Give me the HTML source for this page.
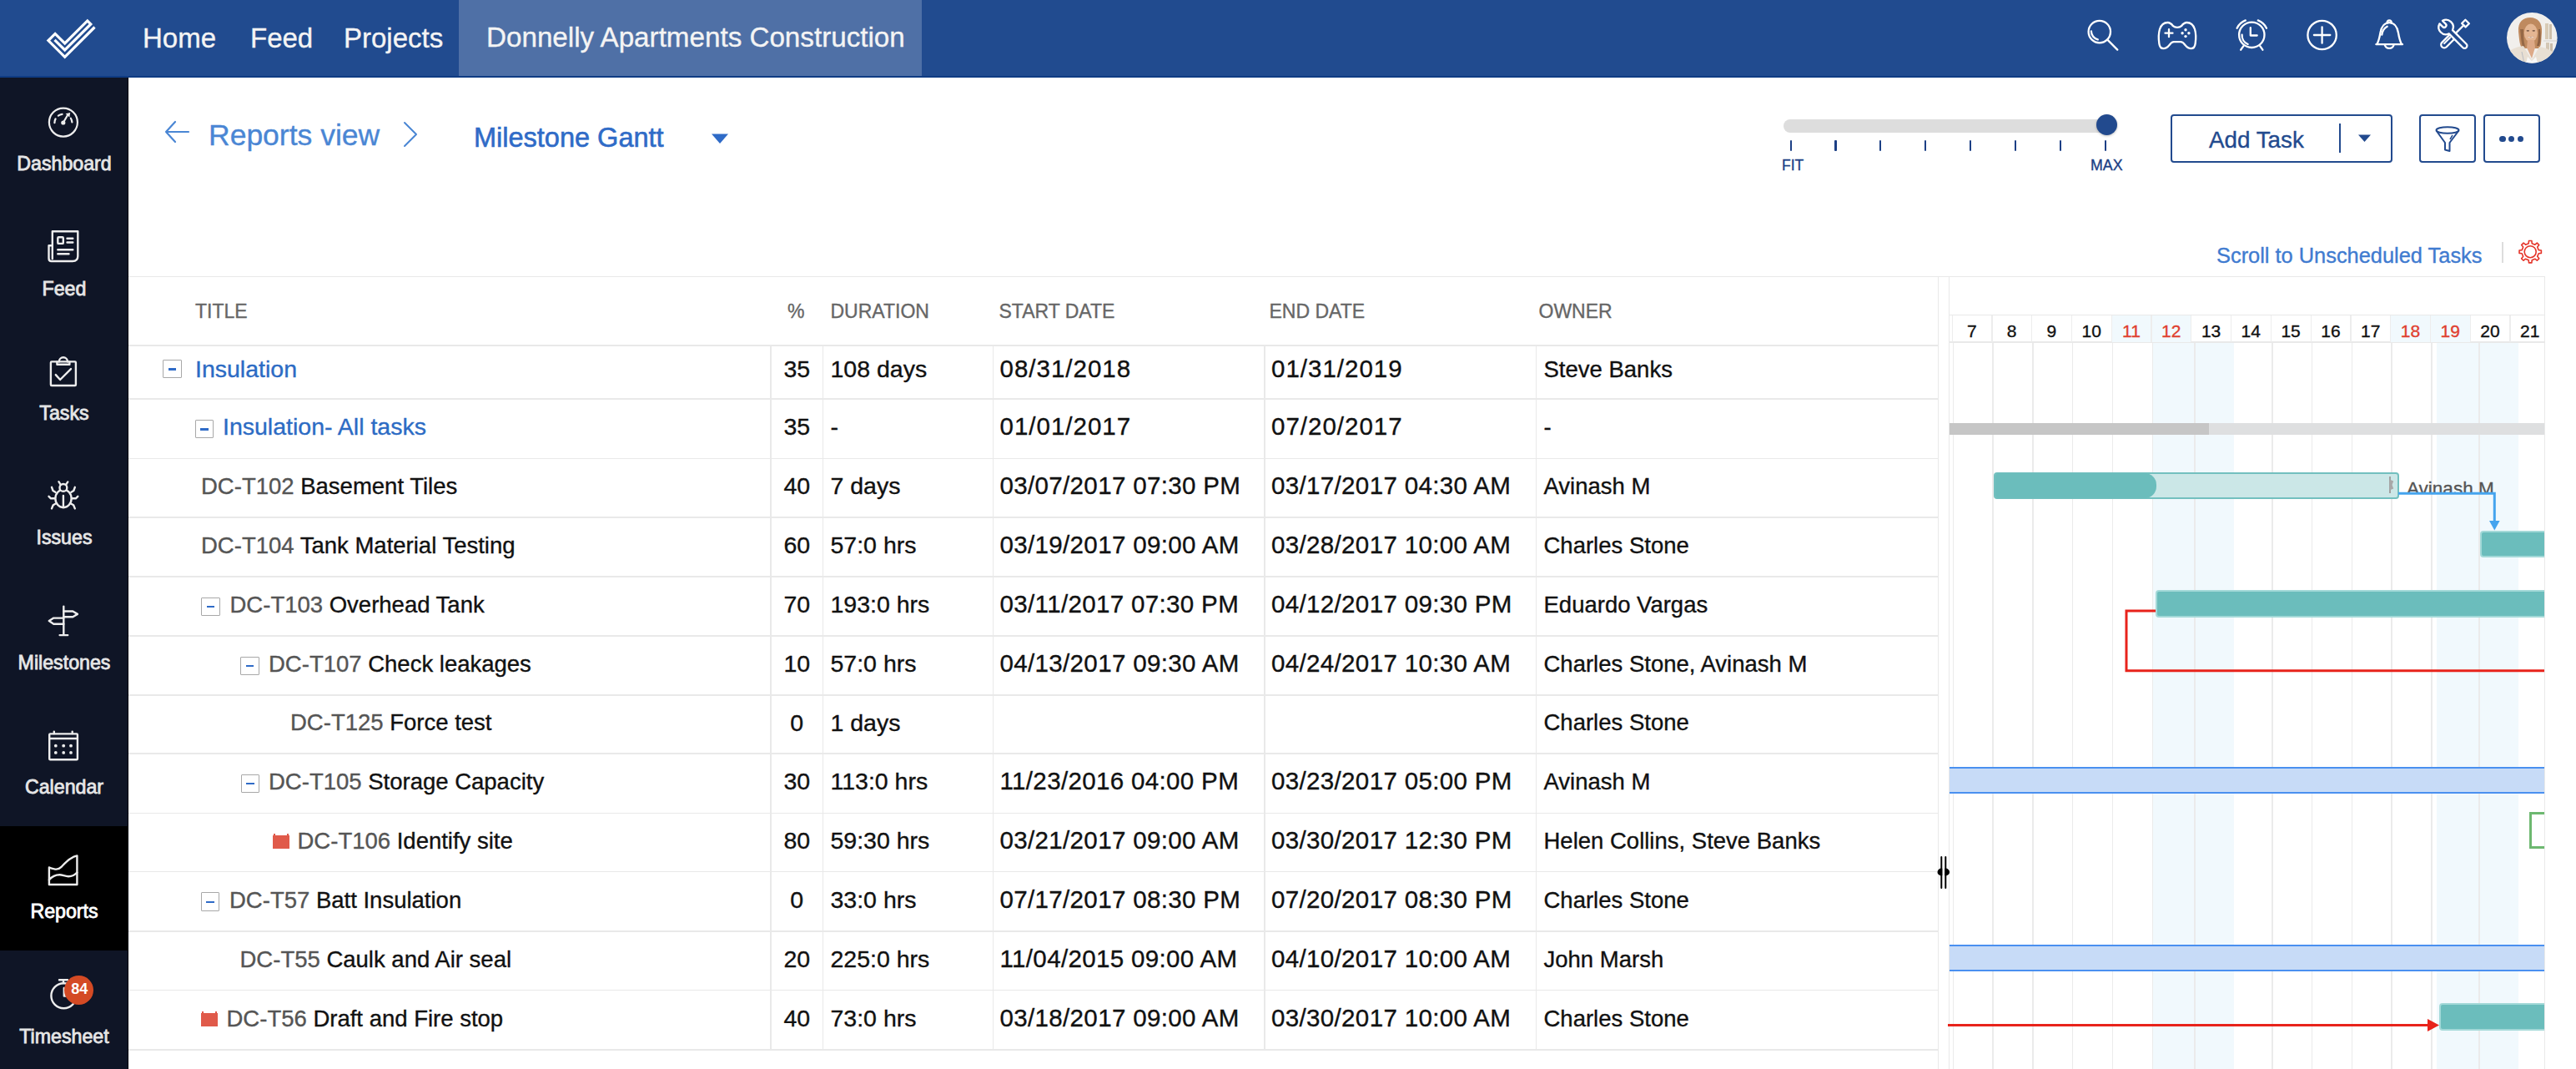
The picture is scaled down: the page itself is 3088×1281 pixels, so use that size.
<!DOCTYPE html>
<html><head><meta charset="utf-8"><title>Milestone Gantt</title>
<style>
html,body{margin:0;padding:0;}
body{width:3088px;height:1281px;overflow:hidden;background:#fff;position:relative;font-family:"Liberation Sans",sans-serif;}
.t{position:absolute;white-space:nowrap;line-height:1;-webkit-text-stroke:0.35px currentColor;}
.r{position:absolute;}
svg{position:absolute;overflow:visible;}
</style></head><body>
<div class="r" style="left:0.0px;top:0.0px;width:3088.0px;height:93.0px;background:#214B8F;"></div>
<div class="r" style="left:550.0px;top:0.0px;width:555.0px;height:91.0px;background:#4F70A6;"></div>
<div class="r" style="left:0.0px;top:91.0px;width:3088.0px;height:2.0px;background:#0F3C83;"></div>
<svg style="left:0;top:0" width="160" height="92"><path d="M65.5,47.8 L77.7,60 L108.8,28.9 L104.8,24.9 L77.7,52 L66.1,40.4 L57.95,48.55 L77.7,68.3 L113.5,32.5" fill="none" stroke="#fff" stroke-width="3.2" stroke-linejoin="miter"/></svg>
<div class="t " style="left:171.0px;top:28.6px;font-size:33px;color:#F4F4F4;">Home</div>
<div class="t " style="left:300.0px;top:28.6px;font-size:33px;color:#F4F4F4;">Feed</div>
<div class="t " style="left:412.0px;top:28.6px;font-size:33px;color:#F4F4F4;">Projects</div>
<div class="t " style="left:583.0px;top:28.4px;font-size:33.2px;color:#F4F4F4;">Donnelly Apartments Construction</div>
<svg style="left:2495px;top:15px" width="60" height="60"><circle cx="21.8" cy="23.1" r="13.2" fill="none" stroke="#fff" stroke-width="2.3" stroke-linecap="round" stroke-linejoin="round" stroke-width="2"/><path d="M31.6,32.9 L43.3,44.6" fill="none" stroke="#fff" stroke-width="2.3" stroke-linecap="round" stroke-linejoin="round" stroke-width="2"/><path d="M11.9,22.5 A10.2,10.2 0 0 0 19.8,32.4" fill="none" stroke="#fff" stroke-width="2.3" stroke-linecap="round" stroke-linejoin="round" stroke-width="2"/></svg>
<svg style="left:2580px;top:15px" width="60" height="60"><path d="M25,16.2 C23,13.5 21.5,12 18.5,12 C13,12 10.5,15.5 9,20 C7.8,24 7.5,31 8.3,37 C8.8,41 10.5,43.2 13.5,43.2 C16.5,43.2 18.5,41.5 20.5,39 C22,37 23.5,35.2 26,35.2 L34,35.2 C36.5,35.2 38,37 39.5,39 C41.5,41.5 43.5,43.2 46.5,43.2 C49.5,43.2 51.2,41 51.7,37 C52.5,31 52.2,24 51,20 C49.5,15.5 47,12 41.5,12 C38.5,12 37,13.5 35,16.2 C33.5,17.5 31.5,17.8 30,17.8 C28.5,17.8 26.5,17.5 25,16.2 Z" fill="none" stroke="#fff" stroke-width="2.3" stroke-linecap="round" stroke-linejoin="round" stroke-width="2.4"/><path d="M20,20.2 L20,29.2 M15.5,24.7 L24.5,24.7" fill="none" stroke="#fff" stroke-width="2.3" stroke-linecap="round" stroke-linejoin="round" stroke-width="3.8" stroke-linecap="butt"/><circle cx="40" cy="20.8" r="1.7" fill="#fff"/><circle cx="40" cy="28.6" r="1.7" fill="#fff"/><circle cx="36.1" cy="24.7" r="1.7" fill="#fff"/><circle cx="43.9" cy="24.7" r="1.7" fill="#fff"/></svg>
<svg style="left:2668px;top:15px" width="60" height="60"><circle cx="31.3" cy="26.8" r="15.2" fill="none" stroke="#fff" stroke-width="2.3" stroke-linecap="round" stroke-linejoin="round" stroke-width="2"/><path d="M29.8,18.2 L29.8,27.5 L37.7,27.5" fill="none" stroke="#fff" stroke-width="2.3" stroke-linecap="round" stroke-linejoin="round" stroke-width="2"/><path d="M13.6,18.7 A19.3,19.3 0 0 1 23.8,9.4 M38.8,9.4 A19.3,19.3 0 0 1 49,18.7" fill="none" stroke="#fff" stroke-width="2.3" stroke-linecap="round" stroke-linejoin="round" stroke-width="2"/><path d="M21.4,40.1 L18.2,44.7 M41.2,40.1 L44.4,44.7" fill="none" stroke="#fff" stroke-width="2.3" stroke-linecap="round" stroke-linejoin="round" stroke-width="2"/><path d="M19.6,26.6 A11.7,11.7 0 0 0 26.6,38" fill="none" stroke="#fff" stroke-width="2.3" stroke-linecap="round" stroke-linejoin="round" stroke-width="2"/></svg>
<svg style="left:2753px;top:15px" width="60" height="60"><circle cx="30.6" cy="27" r="17.2" fill="none" stroke="#fff" stroke-width="2.3" stroke-linecap="round" stroke-linejoin="round" stroke-width="2.1"/><path d="M30.6,17.3 L30.6,36.7 M20.9,27 L40.3,27" fill="none" stroke="#fff" stroke-width="2.3" stroke-linecap="round" stroke-linejoin="round" stroke-width="2.1" stroke-linecap="butt"/></svg>
<svg style="left:2834px;top:15px" width="60" height="60"><path d="M14.4,38.2 L46,38.2 M15.5,37.8 C17.5,34 18.5,30 19.5,24 C20.8,16.5 25,12.1 30.2,12.1 C35.4,12.1 39.6,16.5 40.9,24 C41.9,30 42.9,34 44.9,37.8" fill="none" stroke="#fff" stroke-width="2.3" stroke-linecap="round" stroke-linejoin="round" stroke-width="2.2"/><path d="M27.5,12.8 C27.5,10.5 28.7,9.3 30.2,9.3 C31.7,9.3 32.9,10.5 32.9,12.8" fill="none" stroke="#fff" stroke-width="2.3" stroke-linecap="round" stroke-linejoin="round" stroke-width="2.2"/><path d="M24.8,38.8 A5.6,5.6 0 0 0 35.6,38.8" fill="none" stroke="#fff" stroke-width="2.3" stroke-linecap="round" stroke-linejoin="round" stroke-width="2.2"/><path d="M21.3,26.6 C21.9,22.5 23.5,19 27.7,16.8" fill="none" stroke="#fff" stroke-width="2.3" stroke-linecap="round" stroke-linejoin="round" stroke-width="1.7"/></svg>
<svg style="left:2910px;top:15px" width="60" height="60"><g transform="translate(45.5,13.1) rotate(45)" fill="#214B8F" stroke="#fff" stroke-width="2.3" stroke-linejoin="round" stroke-linecap="round"><rect x="-3.2" y="-3" width="6.4" height="6"/><path d="M0,3 L0,17"/><path d="M-3.8,17 L3.8,17 L3.8,36 A3.8,3.8 0 0 1 -3.8,36 Z"/><path d="M-1,25 L-1,35" stroke-width="2"/></g><g transform="translate(22.1,17.5) rotate(-45)" fill="#214B8F" stroke="#fff" stroke-width="2.3" stroke-linejoin="round"><path d="M-3,8.17 A8.7,8.7 0 0 1 -2.5,-8.33 L-2.5,-3 A2.5,2.5 0 0 0 2.5,-3 L2.5,-8.33 A8.7,8.7 0 0 1 3,8.17 L3,31.6 A3,3 0 0 1 -3,31.6 Z"/></g></svg>
<svg style="left:3004.6px;top:15.2px" width="61" height="61"><defs><clipPath id="av"><circle cx="30.3" cy="30.3" r="30.3"/></clipPath></defs>
<g clip-path="url(#av)"><rect width="61" height="61" fill="#F1EFEC"/>
<rect x="46" y="13" width="4" height="19" fill="#D8CBB6"/><rect x="51" y="14" width="3" height="18" fill="#CDBFAA"/>
<rect x="44" y="33" width="17" height="2" fill="#E3E0DC"/><rect x="47" y="36" width="4" height="16" fill="#D4C7B5"/><rect x="52" y="37" width="3" height="14" fill="#C9BCA9"/>
<path d="M14,23 C13,11 20,6 28,6 C37,6 43,12 42,24 C41,33 42,38 39,43 L18,43 C15,37 15,31 14,23 Z" fill="#BF8A5F"/>
<path d="M16,20 C17,28 17,35 19,41 L22,41 C20,34 20,27 20,20 Z" fill="#7A5236" opacity="0.6"/>
<path d="M38,20 C38,28 38,34 36,40 L39,40 C41,34 41,27 40,20 Z" fill="#6B4630" opacity="0.6"/>
<ellipse cx="28.8" cy="24.5" rx="8" ry="11" fill="#E4B693"/><ellipse cx="25.3" cy="21.8" rx="1.8" ry="0.9" fill="#7A5A48"/><ellipse cx="32.3" cy="21.8" rx="1.8" ry="0.9" fill="#7A5A48"/><path d="M25,28.5 Q28.8,31.8 32.6,28.5 Q28.8,30 25,28.5 Z" fill="#8E5C4C"/><path d="M25.6,29.2 Q28.8,31 32,29.2" fill="none" stroke="#F4EDE6" stroke-width="0.9"/>
<path d="M25,33 L33,33 L34,42 L30,55 L24,42 Z" fill="#DDA987"/>
<path d="M0,61 L0,49 C6,43 13,41 20,40 L30,57 L39,41 C46,42 53,45 61,51 L61,61 Z" fill="#E8DFD3"/>
<path d="M25,53 L30,58 L35,53 L37,61 L23,61 Z" fill="#F8F8F8"/>
<path d="M18,47 L21,61" stroke="#9AA6B8" stroke-width="1" opacity="0.6"/>
</g></svg>
<div class="r" style="left:0.0px;top:93.0px;width:154.0px;height:1188.0px;background:#0F1526;"></div>
<div class="r" style="left:153.0px;top:93.0px;width:1.0px;height:1188.0px;background:#05080F;"></div>
<div class="r" style="left:0.0px;top:990.0px;width:153.0px;height:149.0px;background:#000000;"></div>
<div class="t" style="left:-223.0px;width:600px;text-align:center;top:185.4px;font-size:23.2px;color:#E6E6E6;-webkit-text-stroke:0.8px currentColor;">Dashboard</div>
<div class="t" style="left:-223.0px;width:600px;text-align:center;top:334.7px;font-size:23.2px;color:#E6E6E6;-webkit-text-stroke:0.8px currentColor;">Feed</div>
<div class="t" style="left:-223.0px;width:600px;text-align:center;top:484.0px;font-size:23.2px;color:#E6E6E6;-webkit-text-stroke:0.8px currentColor;">Tasks</div>
<div class="t" style="left:-223.0px;width:600px;text-align:center;top:633.3px;font-size:23.2px;color:#E6E6E6;-webkit-text-stroke:0.8px currentColor;">Issues</div>
<div class="t" style="left:-223.0px;width:600px;text-align:center;top:782.6px;font-size:23.2px;color:#E6E6E6;-webkit-text-stroke:0.8px currentColor;">Milestones</div>
<div class="t" style="left:-223.0px;width:600px;text-align:center;top:931.9px;font-size:23.2px;color:#E6E6E6;-webkit-text-stroke:0.8px currentColor;">Calendar</div>
<div class="t" style="left:-223.0px;width:600px;text-align:center;top:1081.2px;font-size:23.2px;color:#FFFFFF;-webkit-text-stroke:0.8px currentColor;">Reports</div>
<div class="t" style="left:-223.0px;width:600px;text-align:center;top:1230.5px;font-size:23.2px;color:#E6E6E6;-webkit-text-stroke:0.8px currentColor;">Timesheet</div>
<svg style="left:46px;top:117.0px" width="60" height="60"><circle cx="29.9" cy="29.6" r="17" fill="none" stroke="#EDEDED" stroke-width="2.2"/><path d="M19.4,30.2 A10.5,10.5 0 0 1 40.4,30.2" fill="none" stroke="#EDEDED" stroke-width="2.2" stroke-linecap="round" stroke-dasharray="5 5 5 12 5"/><path d="M29.8,30 L35.3,20.5" stroke="#EDEDED" stroke-width="2.2"/><circle cx="29.8" cy="30" r="2.6" fill="#EDEDED"/><path d="M32.6,19.2 L38.2,18 L37.3,23.6 Z" fill="#EDEDED"/></svg>
<svg style="left:46px;top:266.3px" width="60" height="60"><path d="M16.8,44 L16.8,11.2 L47.3,11.2 L47.3,41 C47.3,45 45,47 41,47 L15.5,47 C13.5,47 12.5,45.5 12.5,43.5 L12.5,28.3 L16.8,28.3" fill="none" stroke="#EDEDED" stroke-width="2.4" stroke-linecap="round" stroke-linejoin="round" stroke-width="2.2"/><rect x="23.3" y="18.3" width="6.5" height="7.6" rx="1" fill="none" stroke="#EDEDED" stroke-width="2.4" stroke-linecap="round" stroke-linejoin="round" stroke-width="2.2"/><path d="M34.5,19.8 L41.3,19.8 M34.5,24.5 L41.3,24.5 M23.3,33.2 L41.3,33.2 M23.3,38.3 L36.5,38.3" fill="none" stroke="#EDEDED" stroke-width="2.4" stroke-linecap="round" stroke-linejoin="round" stroke-width="2.2"/></svg>
<svg style="left:46px;top:415.6px" width="60" height="60"><rect x="14.9" y="17.4" width="30" height="28.6" rx="1" fill="none" stroke="#EDEDED" stroke-width="2.4" stroke-linecap="round" stroke-linejoin="round" stroke-width="2.2"/><path d="M22.4,17.6 L22.4,20.8 L37.4,20.8 L37.4,17.6 M24.8,17.4 A5.1,5.1 0 0 1 35,17.4" fill="none" stroke="#EDEDED" stroke-width="2.4" stroke-linecap="round" stroke-linejoin="round" stroke-width="2.2"/><path d="M20.8,33.1 L26.1,39 L39,26.1" fill="none" stroke="#EDEDED" stroke-width="2.4" stroke-linecap="round" stroke-linejoin="round" stroke-width="2.2"/></svg>
<svg style="left:46px;top:564.9px" width="60" height="60"><ellipse cx="30" cy="32.4" rx="9.6" ry="10.8" fill="none" stroke="#EDEDED" stroke-width="2.4" stroke-linecap="round" stroke-linejoin="round" stroke-width="2.2"/><circle cx="29.9" cy="19.4" r="4.4" fill="#0F1526" fill="none" stroke="#EDEDED" stroke-width="2.4" stroke-linecap="round" stroke-linejoin="round" stroke-width="2.2"/><path d="M26.6,15.6 L24.4,12.2 M33.2,15.6 L35.3,12.4 M29.9,29 L29.9,41.6 M20.4,24.8 L17.5,23 L16,18.8 M39.4,24.8 L42.3,23 L43.8,18.8 M19.8,32.3 L15,32.3 L12.5,29.8 M40,32.3 L44.8,32.3 L47.3,29.8 M20.3,38.8 L17.7,40.2 L16,44.4 M39.5,38.8 L42.1,40.2 L43.8,44.4" fill="none" stroke="#EDEDED" stroke-width="2.4" stroke-linecap="round" stroke-linejoin="round" stroke-width="2.2"/></svg>
<svg style="left:46px;top:714.2px" width="60" height="60"><path d="M30.3,12.6 L30.3,47.1 M25.6,47.1 L35.2,47.1" fill="none" stroke="#EDEDED" stroke-width="2.4" stroke-linecap="round" stroke-linejoin="round" stroke-width="2.2"/><path d="M30.3,18.5 L41.3,18.5 L46.9,21.9 L41.3,25.2 L30.3,25.2" fill="none" stroke="#EDEDED" stroke-width="2.4" stroke-linecap="round" stroke-linejoin="round" stroke-width="2.2"/><path d="M30.3,26.6 L18.3,26.6 L12.8,30.1 L18.3,33.7 L30.3,33.7" fill="none" stroke="#EDEDED" stroke-width="2.4" stroke-linecap="round" stroke-linejoin="round" stroke-width="2.2"/></svg>
<svg style="left:46px;top:863.5px" width="60" height="60"><rect x="13.2" y="15.4" width="33.7" height="30.9" rx="1" fill="none" stroke="#EDEDED" stroke-width="2.4" stroke-linecap="round" stroke-linejoin="round" stroke-width="2.2"/><path d="M13.2,21 L46.9,21 M18.8,12.6 L18.8,15 M40.7,12.6 L40.7,15" fill="none" stroke="#EDEDED" stroke-width="2.4" stroke-linecap="round" stroke-linejoin="round" stroke-width="2.2"/><circle cx="20.8" cy="29.7" r="1.9" fill="#EDEDED"/><circle cx="30.2" cy="29.7" r="1.9" fill="#EDEDED"/><circle cx="39" cy="29.7" r="1.9" fill="#EDEDED"/><circle cx="20.8" cy="37.9" r="1.9" fill="#EDEDED"/><circle cx="30.2" cy="37.9" r="1.9" fill="#EDEDED"/><circle cx="39" cy="37.9" r="1.9" fill="#EDEDED"/></svg>
<svg style="left:46px;top:1012.8px" width="60" height="60"><path d="M12.9,47 L12.9,26.4 C16,27.5 19,28.6 21.5,28.6 C24,28.6 25.5,27.8 27.5,25.8 C31,22.2 34,18.8 38,16.2 C41,14.2 43.5,12.9 46.4,12.4 L46.4,47 Z" fill="none" stroke="#EDEDED" stroke-width="2.4" stroke-linecap="round" stroke-linejoin="round" stroke-width="2.2"/><path d="M12.9,41.3 C16,37.5 21,35.2 25.5,35.2 C29,35.2 32,37.2 36,37.2 C40.5,37.2 44,35.5 46.4,32.6" fill="none" stroke="#EDEDED" stroke-width="2.4" stroke-linecap="round" stroke-linejoin="round" stroke-width="2.2"/></svg>
<svg style="left:46px;top:1162.1px" width="60" height="60"><circle cx="30.4" cy="31.2" r="15" fill="none" stroke="#EDEDED" stroke-width="2.4" stroke-linecap="round" stroke-linejoin="round" stroke-width="2.2"/><path d="M25,12.3 L35,12.3 M30,12.3 L30,16" fill="none" stroke="#EDEDED" stroke-width="2.4" stroke-linecap="round" stroke-linejoin="round" stroke-width="2.2"/><path d="M30.8,22 L30.8,31.5 L36,31.5" fill="none" stroke="#EDEDED" stroke-width="2.4" stroke-linecap="round" stroke-linejoin="round" stroke-width="2.2"/></svg>
<div class="r" style="left:77.3px;top:1168.5px;width:35.2px;height:35.2px;border-radius:50%;background:#D44A24;"></div>
<div class="t" style="left:-204.8px;width:600px;text-align:center;top:1175.8px;font-size:18px;color:#fff;font-weight:bold;-webkit-text-stroke:0;">84</div>
<svg style="left:195px;top:140px" width="40" height="40"><path d="M4,18 L31,18 M15,6 L4,18 L15,30" fill="none" stroke="#4A86D4" stroke-width="2.2" stroke-linecap="round" stroke-linejoin="round"/></svg>
<div class="t " style="left:250.0px;top:145.4px;font-size:35.5px;color:#4A86D4;">Reports view</div>
<svg style="left:480px;top:140px" width="30" height="40"><path d="M5,7 L19,21 L5,35" fill="none" stroke="#4A86D4" stroke-width="2" stroke-linecap="round" stroke-linejoin="round"/></svg>
<div class="t " style="left:568.0px;top:148.5px;font-size:32.5px;color:#2F6BC7;-webkit-text-stroke:0.6px currentColor;">Milestone Gantt</div>
<svg style="left:850px;top:155px" width="30" height="20"><path d="M3,5.5 L23,5.5 L13,17 Z" fill="#2F6BC7"/></svg>
<div class="r" style="left:2138.0px;top:142.5px;width:389.0px;height:16.5px;background:#DDDDDD;border-radius:8px;"></div>
<div class="r" style="left:2512.5px;top:136.5px;width:25px;height:25px;border-radius:50%;background:#224A8E;box-shadow:0 1px 3px rgba(0,0,0,0.25);"></div>
<div class="r" style="left:2145.6px;top:168.0px;width:2.0px;height:13.0px;background:#1C3F85;border-radius:1px;"></div>
<div class="r" style="left:2199.0px;top:168.0px;width:3.0px;height:13.0px;background:#1C3F85;border-radius:1px;"></div>
<div class="r" style="left:2253.3px;top:168.0px;width:2.0px;height:13.0px;background:#1C3F85;border-radius:1px;"></div>
<div class="r" style="left:2307.2px;top:168.0px;width:2.0px;height:13.0px;background:#1C3F85;border-radius:1px;"></div>
<div class="r" style="left:2361.1px;top:168.0px;width:2.0px;height:13.0px;background:#1C3F85;border-radius:1px;"></div>
<div class="r" style="left:2414.9px;top:168.0px;width:2.0px;height:13.0px;background:#1C3F85;border-radius:1px;"></div>
<div class="r" style="left:2468.8px;top:168.0px;width:2.0px;height:13.0px;background:#1C3F85;border-radius:1px;"></div>
<div class="r" style="left:2522.7px;top:168.0px;width:2.0px;height:13.0px;background:#1C3F85;border-radius:1px;"></div>
<div class="t " style="left:2136.0px;top:190.2px;font-size:17.5px;color:#1C3F85;">FIT</div>
<div class="t " style="left:2506.0px;top:189.9px;font-size:17.8px;color:#1C3F85;">MAX</div>
<div class="r" style="left:2602px;top:137px;width:266px;height:58px;box-sizing:border-box;border:2.2px solid #224A8E;border-radius:4px;"></div>
<div class="t " style="left:2648.0px;top:154.1px;font-size:27.8px;color:#224A8E;">Add Task</div>
<div class="r" style="left:2804.0px;top:148.0px;width:2.0px;height:35.0px;background:#224A8E;"></div>
<svg style="left:2826px;top:158px" width="20" height="14"><path d="M1,3.5 L16,3.5 L8.5,12 Z" fill="#224A8E"/></svg>
<div class="r" style="left:2900px;top:137px;width:68px;height:58px;box-sizing:border-box;border:2.2px solid #224A8E;border-radius:4px;"></div>
<svg style="left:2900px;top:141px" width="68" height="58"><ellipse cx="34" cy="15" rx="13.5" ry="3.8" fill="none" stroke="#224A8E" stroke-width="2"/><path d="M20.5,15.5 L31,30 L31,38.5 L36.5,40 L36.5,30 L47.5,15.5" fill="none" stroke="#224A8E" stroke-width="2" stroke-linejoin="round"/><path d="M40,21 L37,26" stroke="#224A8E" stroke-width="1.5"/></svg>
<div class="r" style="left:2977px;top:137px;width:68px;height:58px;box-sizing:border-box;border:2.2px solid #224A8E;border-radius:4px;"></div>
<div class="r" style="left:2996.4px;top:163.1px;width:7.2px;height:7.2px;border-radius:50%;background:#224A8E;"></div>
<div class="r" style="left:3007.3px;top:163.1px;width:7.2px;height:7.2px;border-radius:50%;background:#224A8E;"></div>
<div class="r" style="left:3018.1px;top:163.1px;width:7.2px;height:7.2px;border-radius:50%;background:#224A8E;"></div>
<div class="t " style="left:2657.0px;top:294.2px;font-size:25.4px;color:#3F7BD0;">Scroll to Unscheduled Tasks</div>
<div class="r" style="left:2999.2px;top:290.0px;width:1.4px;height:25.0px;background:#DDDDDD;"></div>
<svg style="left:0;top:0" width="3088" height="400"><polygon points="3043.20,299.67 3046.39,299.98 3046.39,303.42 3043.20,303.73 3041.70,307.34 3043.74,309.81 3041.31,312.24 3038.84,310.20 3035.23,311.70 3034.92,314.89 3031.48,314.89 3031.17,311.70 3027.56,310.20 3025.09,312.24 3022.66,309.81 3024.70,307.34 3023.20,303.73 3020.01,303.42 3020.01,299.98 3023.20,299.67 3024.70,296.06 3022.66,293.59 3025.09,291.16 3027.56,293.20 3031.17,291.70 3031.48,288.51 3034.92,288.51 3035.23,291.70 3038.84,293.20 3041.31,291.16 3043.74,293.59 3041.70,296.06" fill="none" stroke="#E5352A" stroke-width="1.6" stroke-linejoin="round"/><circle cx="3033.2" cy="301.7" r="7" fill="none" stroke="#E5352A" stroke-width="1.6"/></svg>
<div class="r" style="left:154.0px;top:330.5px;width:2896.0px;height:1.5px;background:#E9E9E9;"></div>
<div class="r" style="left:2322.5px;top:331.0px;width:1.5px;height:950.0px;background:#E9E9E9;"></div>
<div class="r" style="left:2335.5px;top:331.0px;width:1.5px;height:950.0px;background:#E9E9E9;"></div>
<div class="r" style="left:3049.5px;top:331.0px;width:1.5px;height:950.0px;background:#E9E9E9;"></div>
<div class="r" style="left:154.0px;top:413.3px;width:2169.0px;height:1.5px;background:#E9E9E9;"></div>
<div class="r" style="left:154.0px;top:477.3px;width:2169.0px;height:1.5px;background:#E9E9E9;"></div>
<div class="r" style="left:154.0px;top:548.8px;width:2169.0px;height:1.5px;background:#E9E9E9;"></div>
<div class="r" style="left:154.0px;top:619.3px;width:2169.0px;height:1.5px;background:#E9E9E9;"></div>
<div class="r" style="left:154.0px;top:690.3px;width:2169.0px;height:1.5px;background:#E9E9E9;"></div>
<div class="r" style="left:154.0px;top:761.3px;width:2169.0px;height:1.5px;background:#E9E9E9;"></div>
<div class="r" style="left:154.0px;top:832.3px;width:2169.0px;height:1.5px;background:#E9E9E9;"></div>
<div class="r" style="left:154.0px;top:902.3px;width:2169.0px;height:1.5px;background:#E9E9E9;"></div>
<div class="r" style="left:154.0px;top:973.6px;width:2169.0px;height:1.5px;background:#E9E9E9;"></div>
<div class="r" style="left:154.0px;top:1043.8px;width:2169.0px;height:1.5px;background:#E9E9E9;"></div>
<div class="r" style="left:154.0px;top:1115.3px;width:2169.0px;height:1.5px;background:#E9E9E9;"></div>
<div class="r" style="left:154.0px;top:1185.9px;width:2169.0px;height:1.5px;background:#E9E9E9;"></div>
<div class="r" style="left:154.0px;top:1257.3px;width:2169.0px;height:1.5px;background:#E9E9E9;"></div>
<div class="r" style="left:923.3px;top:414.0px;width:1.5px;height:844.5px;background:#E9E9E9;"></div>
<div class="r" style="left:985.9px;top:414.0px;width:1.5px;height:844.5px;background:#E9E9E9;"></div>
<div class="r" style="left:1189.7px;top:414.0px;width:1.5px;height:844.5px;background:#E9E9E9;"></div>
<div class="r" style="left:1515.3px;top:414.0px;width:1.5px;height:844.5px;background:#E9E9E9;"></div>
<div class="r" style="left:1840.7px;top:414.0px;width:1.5px;height:844.5px;background:#E9E9E9;"></div>
<div class="t " style="left:234.0px;top:362.2px;font-size:23px;color:#666666;">TITLE</div>
<div class="t " style="left:944.0px;top:362.2px;font-size:23px;color:#666666;">%</div>
<div class="t " style="left:995.5px;top:362.2px;font-size:23px;color:#666666;">DURATION</div>
<div class="t " style="left:1197.5px;top:362.2px;font-size:23px;color:#666666;">START DATE</div>
<div class="t " style="left:1521.5px;top:362.2px;font-size:23px;color:#666666;">END DATE</div>
<div class="t " style="left:1844.5px;top:362.2px;font-size:23px;color:#666666;">OWNER</div>
<div class="r" style="left:195.0px;top:430.8px;width:22.5px;height:22.5px;box-sizing:border-box;border:1.6px solid #A8A8A8;border-radius:1px;"></div>
<div class="r" style="left:201.5px;top:441.4px;width:9.5px;height:2.2px;background:#2F6BC7;"></div>
<div class="t " style="left:234.0px;top:427.9px;font-size:28.5px;color:#2C6BC4;">Insulation</div>
<div class="t" style="left:655.3px;width:600px;text-align:center;top:427.9px;font-size:28.5px;color:#111111;">35</div>
<div class="t " style="left:995.5px;top:427.9px;font-size:28.5px;color:#111111;">108 days</div>
<div class="t " style="left:1198.5px;top:427.0px;font-size:29.5px;color:#111111;letter-spacing:1px;">08/31/2018</div>
<div class="t " style="left:1524.0px;top:427.0px;font-size:29.5px;color:#111111;letter-spacing:1px;">01/31/2019</div>
<div class="t " style="left:1850.5px;top:428.7px;font-size:27.5px;color:#111111;">Steve Banks</div>
<div class="r" style="left:233.5px;top:502.8px;width:22.5px;height:22.5px;box-sizing:border-box;border:1.6px solid #A8A8A8;border-radius:1px;"></div>
<div class="r" style="left:240.0px;top:513.4px;width:9.5px;height:2.2px;background:#2F6BC7;"></div>
<div class="t " style="left:267.0px;top:497.2px;font-size:28.5px;color:#2C6BC4;">Insulation- All tasks</div>
<div class="t" style="left:655.3px;width:600px;text-align:center;top:497.2px;font-size:28.5px;color:#111111;">35</div>
<div class="t " style="left:995.5px;top:497.2px;font-size:28.5px;color:#111111;">-</div>
<div class="t " style="left:1198.5px;top:496.4px;font-size:29.5px;color:#111111;letter-spacing:1px;">01/01/2017</div>
<div class="t " style="left:1524.0px;top:496.4px;font-size:29.5px;color:#111111;letter-spacing:1px;">07/20/2017</div>
<div class="t " style="left:1850.5px;top:498.1px;font-size:27.5px;color:#111111;">-</div>
<div class="t " style="left:241.0px;top:569.1px;font-size:27.5px;color:#111111;"><span style="color:#555555">DC-T102</span> Basement Tiles</div>
<div class="t" style="left:655.3px;width:600px;text-align:center;top:568.2px;font-size:28.5px;color:#111111;">40</div>
<div class="t " style="left:995.5px;top:568.2px;font-size:28.5px;color:#111111;">7 days</div>
<div class="t " style="left:1198.5px;top:567.4px;font-size:29.5px;color:#111111;letter-spacing:0.35px;">03/07/2017 07:30 PM</div>
<div class="t " style="left:1524.0px;top:567.4px;font-size:29.5px;color:#111111;letter-spacing:0.35px;">03/17/2017 04:30 AM</div>
<div class="t " style="left:1850.5px;top:569.1px;font-size:27.5px;color:#111111;">Avinash M</div>
<div class="t " style="left:241.0px;top:639.8px;font-size:27.5px;color:#111111;"><span style="color:#555555">DC-T104</span> Tank Material Testing</div>
<div class="t" style="left:655.3px;width:600px;text-align:center;top:639.0px;font-size:28.5px;color:#111111;">60</div>
<div class="t " style="left:995.5px;top:639.0px;font-size:28.5px;color:#111111;">57:0 hrs</div>
<div class="t " style="left:1198.5px;top:638.1px;font-size:29.5px;color:#111111;letter-spacing:0.35px;">03/19/2017 09:00 AM</div>
<div class="t " style="left:1524.0px;top:638.1px;font-size:29.5px;color:#111111;letter-spacing:0.35px;">03/28/2017 10:00 AM</div>
<div class="t " style="left:1850.5px;top:639.8px;font-size:27.5px;color:#111111;">Charles Stone</div>
<div class="r" style="left:241.0px;top:715.5px;width:22.5px;height:22.5px;box-sizing:border-box;border:1.6px solid #A8A8A8;border-radius:1px;"></div>
<div class="r" style="left:247.5px;top:726.1px;width:9.5px;height:2.2px;background:#2F6BC7;"></div>
<div class="t " style="left:275.5px;top:710.8px;font-size:27.5px;color:#111111;"><span style="color:#555555">DC-T103</span> Overhead Tank</div>
<div class="t" style="left:655.3px;width:600px;text-align:center;top:710.0px;font-size:28.5px;color:#111111;">70</div>
<div class="t " style="left:995.5px;top:710.0px;font-size:28.5px;color:#111111;">193:0 hrs</div>
<div class="t " style="left:1198.5px;top:709.1px;font-size:29.5px;color:#111111;letter-spacing:0.35px;">03/11/2017 07:30 PM</div>
<div class="t " style="left:1524.0px;top:709.1px;font-size:29.5px;color:#111111;letter-spacing:0.35px;">04/12/2017 09:30 PM</div>
<div class="t " style="left:1850.5px;top:710.8px;font-size:27.5px;color:#111111;">Eduardo Vargas</div>
<div class="r" style="left:288.3px;top:786.5px;width:22.5px;height:22.5px;box-sizing:border-box;border:1.6px solid #A8A8A8;border-radius:1px;"></div>
<div class="r" style="left:294.8px;top:797.1px;width:9.5px;height:2.2px;background:#2F6BC7;"></div>
<div class="t " style="left:322.0px;top:781.8px;font-size:27.5px;color:#111111;"><span style="color:#555555">DC-T107</span> Check leakages</div>
<div class="t" style="left:655.3px;width:600px;text-align:center;top:781.0px;font-size:28.5px;color:#111111;">10</div>
<div class="t " style="left:995.5px;top:781.0px;font-size:28.5px;color:#111111;">57:0 hrs</div>
<div class="t " style="left:1198.5px;top:780.1px;font-size:29.5px;color:#111111;letter-spacing:0.35px;">04/13/2017 09:30 AM</div>
<div class="t " style="left:1524.0px;top:780.1px;font-size:29.5px;color:#111111;letter-spacing:0.35px;">04/24/2017 10:30 AM</div>
<div class="t " style="left:1850.5px;top:781.8px;font-size:27.5px;color:#111111;">Charles Stone, Avinash M</div>
<div class="t " style="left:348.0px;top:852.3px;font-size:27.5px;color:#111111;"><span style="color:#555555">DC-T125</span> Force test</div>
<div class="t" style="left:655.3px;width:600px;text-align:center;top:851.5px;font-size:28.5px;color:#111111;">0</div>
<div class="t " style="left:995.5px;top:851.5px;font-size:28.5px;color:#111111;">1 days</div>
<div class="t " style="left:1198.5px;top:850.6px;font-size:29.5px;color:#111111;letter-spacing:1px;"></div>
<div class="t " style="left:1524.0px;top:850.6px;font-size:29.5px;color:#111111;letter-spacing:1px;"></div>
<div class="t " style="left:1850.5px;top:852.3px;font-size:27.5px;color:#111111;">Charles Stone</div>
<div class="r" style="left:288.9px;top:927.6px;width:22.5px;height:22.5px;box-sizing:border-box;border:1.6px solid #A8A8A8;border-radius:1px;"></div>
<div class="r" style="left:295.4px;top:938.2px;width:9.5px;height:2.2px;background:#2F6BC7;"></div>
<div class="t " style="left:322.0px;top:923.0px;font-size:27.5px;color:#111111;"><span style="color:#555555">DC-T105</span> Storage Capacity</div>
<div class="t" style="left:655.3px;width:600px;text-align:center;top:922.1px;font-size:28.5px;color:#111111;">30</div>
<div class="t " style="left:995.5px;top:922.1px;font-size:28.5px;color:#111111;">113:0 hrs</div>
<div class="t " style="left:1198.5px;top:921.3px;font-size:29.5px;color:#111111;letter-spacing:0.35px;">11/23/2016 04:00 PM</div>
<div class="t " style="left:1524.0px;top:921.3px;font-size:29.5px;color:#111111;letter-spacing:0.35px;">03/23/2017 05:00 PM</div>
<div class="t " style="left:1850.5px;top:923.0px;font-size:27.5px;color:#111111;">Avinash M</div>
<div class="r" style="left:326.9px;top:1002.4px;width:20.5px;height:15.0px;background:#E05A4A;"></div>
<div class="r" style="left:327.9px;top:998.9px;width:2.0px;height:3.5px;background:#E05A4A;"></div>
<div class="r" style="left:344.4px;top:998.9px;width:2.0px;height:3.5px;background:#E05A4A;"></div>
<div class="r" style="left:326.9px;top:1000.9px;width:20.5px;height:1.5px;background:#E05A4A;"></div>
<div class="t " style="left:356.5px;top:993.7px;font-size:27.5px;color:#111111;"><span style="color:#555555">DC-T106</span> Identify site</div>
<div class="t" style="left:655.3px;width:600px;text-align:center;top:992.9px;font-size:28.5px;color:#111111;">80</div>
<div class="t " style="left:995.5px;top:992.9px;font-size:28.5px;color:#111111;">59:30 hrs</div>
<div class="t " style="left:1198.5px;top:992.0px;font-size:29.5px;color:#111111;letter-spacing:0.35px;">03/21/2017 09:00 AM</div>
<div class="t " style="left:1524.0px;top:992.0px;font-size:29.5px;color:#111111;letter-spacing:0.35px;">03/30/2017 12:30 PM</div>
<div class="t " style="left:1850.5px;top:993.7px;font-size:27.5px;color:#111111;">Helen Collins, Steve Banks</div>
<div class="r" style="left:240.6px;top:1069.2px;width:22.5px;height:22.5px;box-sizing:border-box;border:1.6px solid #A8A8A8;border-radius:1px;"></div>
<div class="r" style="left:247.1px;top:1079.8px;width:9.5px;height:2.2px;background:#2F6BC7;"></div>
<div class="t " style="left:275.0px;top:1064.6px;font-size:27.5px;color:#111111;"><span style="color:#555555">DC-T57</span> Batt Insulation</div>
<div class="t" style="left:655.3px;width:600px;text-align:center;top:1063.7px;font-size:28.5px;color:#111111;">0</div>
<div class="t " style="left:995.5px;top:1063.7px;font-size:28.5px;color:#111111;">33:0 hrs</div>
<div class="t " style="left:1198.5px;top:1062.9px;font-size:29.5px;color:#111111;letter-spacing:0.35px;">07/17/2017 08:30 PM</div>
<div class="t " style="left:1524.0px;top:1062.9px;font-size:29.5px;color:#111111;letter-spacing:0.35px;">07/20/2017 08:30 PM</div>
<div class="t " style="left:1850.5px;top:1064.6px;font-size:27.5px;color:#111111;">Charles Stone</div>
<div class="t " style="left:287.5px;top:1135.6px;font-size:27.5px;color:#111111;"><span style="color:#555555">DC-T55</span> Caulk and Air seal</div>
<div class="t" style="left:655.3px;width:600px;text-align:center;top:1134.8px;font-size:28.5px;color:#111111;">20</div>
<div class="t " style="left:995.5px;top:1134.8px;font-size:28.5px;color:#111111;">225:0 hrs</div>
<div class="t " style="left:1198.5px;top:1133.9px;font-size:29.5px;color:#111111;letter-spacing:0.35px;">11/04/2015 09:00 AM</div>
<div class="t " style="left:1524.0px;top:1133.9px;font-size:29.5px;color:#111111;letter-spacing:0.35px;">04/10/2017 10:00 AM</div>
<div class="t " style="left:1850.5px;top:1135.6px;font-size:27.5px;color:#111111;">John Marsh</div>
<div class="r" style="left:240.6px;top:1215.3px;width:20.5px;height:15.0px;background:#E05A4A;"></div>
<div class="r" style="left:241.6px;top:1211.8px;width:2.0px;height:3.5px;background:#E05A4A;"></div>
<div class="r" style="left:258.1px;top:1211.8px;width:2.0px;height:3.5px;background:#E05A4A;"></div>
<div class="r" style="left:240.6px;top:1213.8px;width:20.5px;height:1.5px;background:#E05A4A;"></div>
<div class="t " style="left:271.5px;top:1206.6px;font-size:27.5px;color:#111111;"><span style="color:#555555">DC-T56</span> Draft and Fire stop</div>
<div class="t" style="left:655.3px;width:600px;text-align:center;top:1205.8px;font-size:28.5px;color:#111111;">40</div>
<div class="t " style="left:995.5px;top:1205.8px;font-size:28.5px;color:#111111;">73:0 hrs</div>
<div class="t " style="left:1198.5px;top:1204.9px;font-size:29.5px;color:#111111;letter-spacing:0.35px;">03/18/2017 09:00 AM</div>
<div class="t " style="left:1524.0px;top:1204.9px;font-size:29.5px;color:#111111;letter-spacing:0.35px;">03/30/2017 10:00 AM</div>
<div class="t " style="left:1850.5px;top:1206.6px;font-size:27.5px;color:#111111;">Charles Stone</div>
<div class="r" style="left:2337.0px;top:376.5px;width:713.0px;height:1.5px;background:#E9E9E9;"></div>
<div class="r" style="left:2337.0px;top:409.3px;width:713.0px;height:1.5px;background:#E9E9E9;"></div>
<div class="r" style="left:2531.1px;top:378.0px;width:47.8px;height:31.5px;background:#F1F9FD;"></div>
<div class="r" style="left:2578.9px;top:378.0px;width:47.8px;height:31.5px;background:#F1F9FD;"></div>
<div class="r" style="left:2865.6px;top:378.0px;width:47.8px;height:31.5px;background:#F1F9FD;"></div>
<div class="r" style="left:2913.4px;top:378.0px;width:47.8px;height:31.5px;background:#F1F9FD;"></div>
<div class="r" style="left:2339.5px;top:378.0px;width:1.3px;height:31.5px;background:#EDEDED;"></div>
<div class="t" style="left:2063.9px;width:600px;text-align:center;top:385.7px;font-size:21px;color:#111;">7</div>
<div class="r" style="left:2387.3px;top:378.0px;width:1.3px;height:31.5px;background:#EDEDED;"></div>
<div class="t" style="left:2111.7px;width:600px;text-align:center;top:385.7px;font-size:21px;color:#111;">8</div>
<div class="r" style="left:2435.1px;top:378.0px;width:1.3px;height:31.5px;background:#EDEDED;"></div>
<div class="t" style="left:2159.4px;width:600px;text-align:center;top:385.7px;font-size:21px;color:#111;">9</div>
<div class="r" style="left:2482.8px;top:378.0px;width:1.3px;height:31.5px;background:#EDEDED;"></div>
<div class="t" style="left:2207.2px;width:600px;text-align:center;top:385.7px;font-size:21px;color:#111;">10</div>
<div class="r" style="left:2530.6px;top:378.0px;width:1.3px;height:31.5px;background:#EDEDED;"></div>
<div class="t" style="left:2255.0px;width:600px;text-align:center;top:385.7px;font-size:21px;color:#E0402F;">11</div>
<div class="r" style="left:2578.4px;top:378.0px;width:1.3px;height:31.5px;background:#EDEDED;"></div>
<div class="t" style="left:2302.8px;width:600px;text-align:center;top:385.7px;font-size:21px;color:#E0402F;">12</div>
<div class="r" style="left:2626.2px;top:378.0px;width:1.3px;height:31.5px;background:#EDEDED;"></div>
<div class="t" style="left:2350.6px;width:600px;text-align:center;top:385.7px;font-size:21px;color:#111;">13</div>
<div class="r" style="left:2674.0px;top:378.0px;width:1.3px;height:31.5px;background:#EDEDED;"></div>
<div class="t" style="left:2398.3px;width:600px;text-align:center;top:385.7px;font-size:21px;color:#111;">14</div>
<div class="r" style="left:2721.7px;top:378.0px;width:1.3px;height:31.5px;background:#EDEDED;"></div>
<div class="t" style="left:2446.1px;width:600px;text-align:center;top:385.7px;font-size:21px;color:#111;">15</div>
<div class="r" style="left:2769.5px;top:378.0px;width:1.3px;height:31.5px;background:#EDEDED;"></div>
<div class="t" style="left:2493.9px;width:600px;text-align:center;top:385.7px;font-size:21px;color:#111;">16</div>
<div class="r" style="left:2817.3px;top:378.0px;width:1.3px;height:31.5px;background:#EDEDED;"></div>
<div class="t" style="left:2541.7px;width:600px;text-align:center;top:385.7px;font-size:21px;color:#111;">17</div>
<div class="r" style="left:2865.1px;top:378.0px;width:1.3px;height:31.5px;background:#EDEDED;"></div>
<div class="t" style="left:2589.5px;width:600px;text-align:center;top:385.7px;font-size:21px;color:#E0402F;">18</div>
<div class="r" style="left:2912.9px;top:378.0px;width:1.3px;height:31.5px;background:#EDEDED;"></div>
<div class="t" style="left:2637.2px;width:600px;text-align:center;top:385.7px;font-size:21px;color:#E0402F;">19</div>
<div class="r" style="left:2960.6px;top:378.0px;width:1.3px;height:31.5px;background:#EDEDED;"></div>
<div class="t" style="left:2685.0px;width:600px;text-align:center;top:385.7px;font-size:21px;color:#111;">20</div>
<div class="r" style="left:3008.4px;top:378.0px;width:1.3px;height:31.5px;background:#EDEDED;"></div>
<div class="t" style="left:2732.8px;width:600px;text-align:center;top:385.7px;font-size:21px;color:#111;">21</div>
<div class="r" style="left:2581.0px;top:411.0px;width:97.0px;height:870.0px;background:#F1F9FD;"></div>
<div class="r" style="left:2921.0px;top:411.0px;width:98.0px;height:870.0px;background:#F1F9FD;"></div>
<div class="r" style="left:2340.9px;top:411.0px;width:1.3px;height:870.0px;background:#EBEBEB;"></div>
<div class="r" style="left:2388.4px;top:411.0px;width:1.3px;height:870.0px;background:#EBEBEB;"></div>
<div class="r" style="left:2436.4px;top:411.0px;width:1.3px;height:870.0px;background:#EBEBEB;"></div>
<div class="r" style="left:2483.9px;top:411.0px;width:1.3px;height:870.0px;background:#EBEBEB;"></div>
<div class="r" style="left:2531.9px;top:411.0px;width:1.3px;height:870.0px;background:#EBEBEB;"></div>
<div class="r" style="left:2579.9px;top:411.0px;width:1.3px;height:870.0px;background:#EBEBEB;"></div>
<div class="r" style="left:2630.4px;top:411.0px;width:1.3px;height:870.0px;background:#EBEBEB;"></div>
<div class="r" style="left:2723.4px;top:411.0px;width:1.3px;height:870.0px;background:#EBEBEB;"></div>
<div class="r" style="left:2770.9px;top:411.0px;width:1.3px;height:870.0px;background:#EBEBEB;"></div>
<div class="r" style="left:2818.9px;top:411.0px;width:1.3px;height:870.0px;background:#EBEBEB;"></div>
<div class="r" style="left:2866.4px;top:411.0px;width:1.3px;height:870.0px;background:#EBEBEB;"></div>
<div class="r" style="left:2914.4px;top:411.0px;width:1.3px;height:870.0px;background:#EBEBEB;"></div>
<div class="r" style="left:2971.4px;top:411.0px;width:1.3px;height:870.0px;background:#EBEBEB;"></div>
<div class="r" style="left:2336.5px;top:507.0px;width:713.0px;height:13.5px;background:#DEDFE0;"></div>
<div class="r" style="left:2336.5px;top:507.0px;width:311.0px;height:13.5px;background:#C6C6C6;"></div>
<div class="r" style="left:2390px;top:565.5px;width:485.5px;height:32.5px;box-sizing:border-box;background:#CBE7E7;border:2px solid #73C0BF;border-radius:4px;"></div>
<div class="r" style="left:2391.5px;top:567px;width:193px;height:29.5px;background:#6BBDBC;border-radius:3px 14px 14px 3px;"></div>
<div class="r" style="left:2863.5px;top:571.0px;width:2.0px;height:20.0px;background:#A0A0A0;"></div>
<svg style="left:2860px;top:570px" width="14" height="24"><path d="M4.5,4.4 L9.2,6.5 L7.6,11 L9.2,15.5 L4.5,17.5 Z" fill="#A8A8A8"/></svg>
<div class="r" style="left:2880px;top:560px;width:160px;height:30px;overflow:hidden;"><div class="t" style="left:5px;top:14.5px;font-size:22.5px;color:#555;">Avinash M</div></div>
<svg style="left:0;top:0" width="3088" height="1281"><path d="M2875,591.2 L2990.3,591.2 L2990.3,627" fill="none" stroke="#45A4EE" stroke-width="3"/><path d="M2984,624 L2996.6,624 L2990.3,635.5 Z" fill="#45A4EE"/><path d="M2584,732 L2549,732 L2549,803.7 L3050,803.7" fill="none" stroke="#E8231B" stroke-width="3"/><path d="M2335,1228.4 L2912,1228.4" fill="none" stroke="#E8231B" stroke-width="3"/><path d="M2910,1221 L2924,1228.4 L2910,1236 Z" fill="#E8231B"/></svg>
<div class="r" style="left:2973px;top:635.5px;width:85px;height:32.5px;box-sizing:border-box;background:#6BBDBC;border:2px solid #A3D9D8;border-radius:4px;"></div>
<div class="r" style="left:2584px;top:707px;width:480px;height:32.5px;box-sizing:border-box;background:#6BBDBC;border:2px solid #A3D9D8;border-radius:4px;"></div>
<div class="r" style="left:2336.5px;top:918.5px;width:713px;height:32.5px;box-sizing:border-box;background:#C7DBF7;border-top:2px solid #4A90F0;border-bottom:2px solid #4A90F0;"></div>
<div class="r" style="left:3031.5px;top:973px;width:30px;height:44px;box-sizing:border-box;border:3px solid #6DB870;"></div>
<div class="r" style="left:2336.5px;top:1132px;width:713px;height:32px;box-sizing:border-box;background:#C7DBF7;border-top:2px solid #4A90F0;border-bottom:2px solid #4A90F0;"></div>
<div class="r" style="left:2923.5px;top:1202px;width:140px;height:32.5px;box-sizing:border-box;background:#6BBDBC;border:2px solid #A3D9D8;border-radius:4px;"></div>
<div class="r" style="left:3051.0px;top:331.0px;width:37.0px;height:950.0px;background:#FFFFFF;"></div>
<div class="r" style="left:3049.5px;top:331.0px;width:1.5px;height:950.0px;background:#E9E9E9;"></div>
<svg style="left:2310px;top:1015px" width="40" height="60"><ellipse cx="17.3" cy="30" rx="4.8" ry="4.4" fill="#000"/><ellipse cx="22.3" cy="30" rx="4.8" ry="4.4" fill="#000"/><rect x="18.3" y="24" width="3" height="12" fill="#fff"/><path d="M17.3,12 L17.3,49 M22.3,12 L22.3,49" stroke="#000" stroke-width="2" stroke-linecap="round"/></svg>
</body></html>
